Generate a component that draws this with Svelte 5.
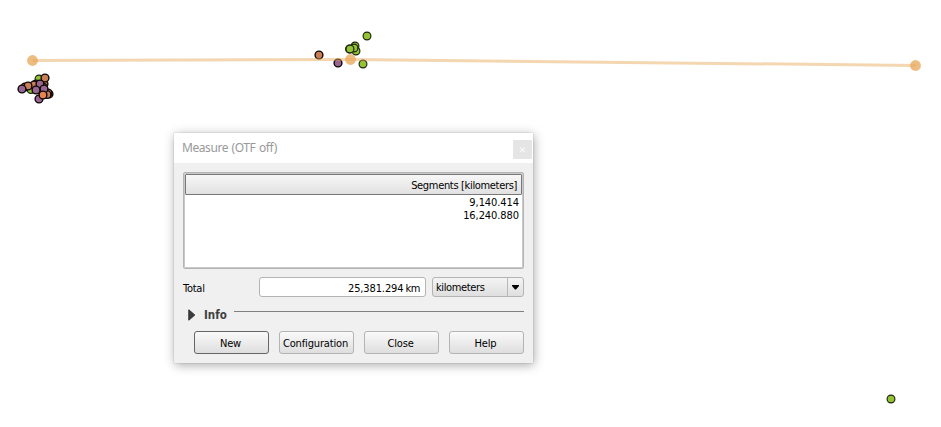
<script>
  const G = '#93c335', O = '#c97f56', P = '#986590', B = '#e6834f';
  const points = [
    [31, 89.5, G], [39, 79, G], [49, 94, O], [48, 93, O], [47, 94.5, O],
    [25, 87, O], [36, 84, O], [34, 85, O], [28, 86, O], [44, 84, O],
    [45, 78, O], [43, 87, O], [22, 89, P], [39, 99, P], [42, 91, O],
    [40, 84, P], [44, 89, P], [36, 90, P], [43, 95, B],
    [319, 55, O], [338, 63, P], [367, 36, G], [363, 64, G],
    [356, 51, G], [355, 46, G], [354, 48, G], [349.5, 49, G], [350, 49, G],
    [891, 399, G]
  ];
  const nodes = [[32.5, 60.5], [350.5, 59.5], [915.5, 65.5]];
  const segments = ['9,140.414', '16,240.880'];
  const buttons = ['New', 'Configuration', 'Close', 'Help'];
</script>

<main>
  <svg class="map" width="941" height="427" viewBox="0 0 941 427">
    {#each points as [x, y, fill]}
      <circle cx={x} cy={y} r="3.9" {fill} stroke={fill === G ? '#1d240f' : '#0b0706'} stroke-width={fill === G ? 1.15 : 1.4} />
    {/each}
    <polyline points={nodes.join(' ')} fill="none" stroke="#e7a552" stroke-opacity=".45" stroke-width="3" />
    {#each nodes as [x, y]}
      <circle cx={x} cy={y} r="5.4" fill="#e8a95c" fill-opacity=".78" />
    {/each}
  </svg>

  <section class="dialog">
    <header>
      <span class="title">Measure (OTF off)</span>
      <button class="x" aria-label="close"><svg width="19" height="19"><path d="M7.2 7.5L11.8 12M11.8 7.5L7.2 12" stroke="#f6f6f6" stroke-width="1.4" /></svg></button>
    </header>
    <div class="content">
      <div class="table">
        <div class="head"><span>Segments [kilometers]</span></div>
        {#each segments as s}
          <div class="row"><span>{s}</span></div>
        {/each}
      </div>
      <div class="total">
        <span class="label">Total</span>
        <div class="field"><span class="num">25,381.294</span><span class="unit">km</span></div>
        <div class="combo">
          <span>kilometers</span>
          <i><svg width="15" height="18"><path d="M4 7H11V8L8 11.5H7L4 8Z" fill="#000" /></svg></i>
        </div>
      </div>
      <div class="info">
        <svg width="8" height="12"><path d="M0.8 0.8L6.8 6L0.8 11.2Z" fill="#3c3c3c" stroke="#303030" /></svg>
        <b>Info</b><hr />
      </div>
      <div class="buttons">
        {#each buttons as label, i}
          <button class="btn" class:main={i === 0}><span>{label}</span></button>
        {/each}
      </div>
    </div>
  </section>
</main>

<style>
  :global(body) { background: #fff; overflow: hidden; }
  main {
    position: relative; width: 941px; height: 427px; overflow: hidden;
    font: 11px/13px "DejaVu Sans Condensed", "DejaVu Sans", sans-serif;
    font-stretch: condensed; color: #000;
  }
  * { box-sizing: border-box; }
  .map { display: block; }
  .dialog {
    position: absolute; left: 174px; top: 133px; width: 359px; height: 230px;
    background: #f0f0f0; box-shadow: 0 0 1px rgba(0,0,0,.3), 1px 2px 10px rgba(0,0,0,.34);
  }
  header { height: 30px; background: #fff; display: flex; justify-content: space-between; padding: 7px 1px 0 8px; }
  .title { font: 12px/16px "Noto Sans", sans-serif; color: #999; letter-spacing: -.42px; word-spacing: .8px; white-space: nowrap; }
  .x { width: 19px; height: 19px; border: 0; padding: 0; background: #e5e5e5; }
  .x svg { display: block; }
  .content { padding: 9px 9px 0; }
  .table { height: 97px; background: #fff; border: 1px solid #b4b4b4; box-shadow: inset 0 0 0 1px #c9c9c9; border-radius: 2px; padding: 1px; }
  .head {
    height: 21px; border: 1px solid #777; border-radius: 1px; margin-bottom: 1px; padding: 4px 4px 0 0;
    text-align: right; background: linear-gradient(#f7f7f7, #e1e1e1); letter-spacing: -.33px;
  }
  .row { height: 13px; text-align: right; padding-right: 3px; letter-spacing: -.08px; }
  .total { display: flex; margin-top: 8px; height: 20px; }
  .label { width: 76px; padding-top: 5px; letter-spacing: -.25px; }
  .field { width: 167px; border: 1px solid #b4b4b4; border-radius: 3px; background: #fff; display: flex; justify-content: flex-end; gap: 2px; padding: 4px 5px 0 0; }
  .num { letter-spacing: -.12px; }
  .unit { letter-spacing: -.4px; }
  .combo { width: 92px; margin-left: 6px; border: 1px solid #b4b4b4; border-radius: 3px; background: linear-gradient(#f4f4f4, #dfdfdf); display: flex; justify-content: space-between; }
  .combo span { padding: 3px 0 0 3px; letter-spacing: -.38px; }
  .combo i { width: 16px; border-left: 1px solid #b8b8b8; }
  .combo svg { display: block; }
  .info { display: flex; height: 20px; margin-top: 7px; padding-left: 5px; align-items: center; }
  .info b { margin: 3px 0 0 8px; width: 25px; color: #404040; font-size: 11.5px; }
  .info svg { margin-top: 2px; }
  .info hr { flex: 1; margin: -5px 0 0 5px; border: 0; height: 1px; background: #808080; }
  .buttons { display: flex; gap: 10px; margin: 7px 0 0 11px; }
  .btn {
    width: 75px; height: 23px; padding: 1px 2px 0 0; border: 1px solid #b4b4b4; border-radius: 3px;
    background: linear-gradient(#fafafa, #dedede); font: inherit; color: #000; white-space: nowrap; letter-spacing: -.15px;
  }
  .main { border-color: #666; }
</style>
